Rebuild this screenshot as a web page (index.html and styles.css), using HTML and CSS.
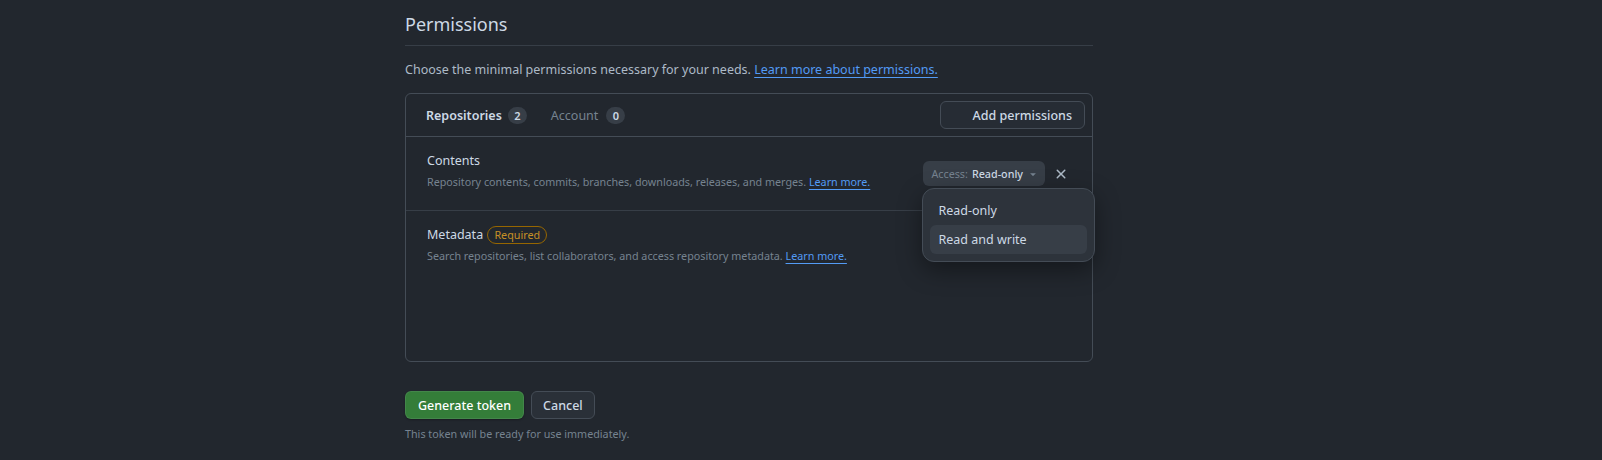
FILE: index.html
```html
<!DOCTYPE html>
<html lang="en">
<head>
<meta charset="utf-8">
<title>Permissions</title>
<link rel="stylesheet" href="styles.css">
</head>
<body>
<div class="page">
  <main class="main">
    <h2 class="subhead">Permissions</h2>
    <p class="intro">Choose the minimal permissions necessary for your needs. <a class="link" href="#">Learn more about permissions.</a></p>

    <section class="perm-box">
      <div class="perm-head">
        <nav class="tabs">
          <span class="tab tab-active">Repositories <span class="counter">2</span></span>
          <span class="tab">Account <span class="counter">0</span></span>
        </nav>
        <button class="btn btn-add" type="button"><span class="icon-slot"></span>Add permissions</button>
      </div>

      <ul class="perm-list">
        <li class="perm-row">
          <div class="perm-info">
            <div class="perm-name">Contents</div>
            <div class="perm-desc">Repository contents, commits, branches, downloads, releases, and merges. <a class="link" href="#">Learn more.</a></div>
          </div>
          <div class="perm-actions">
            <div class="access-wrap">
              <button class="access-btn" type="button"><span class="access-label">Access:</span><span class="access-value">Read-only</span><svg class="caret" width="12" height="12" viewBox="0 0 16 16" aria-hidden="true"><path fill="currentColor" d="m4.427 7.427 3.396 3.396a.25.25 0 0 0 .354 0l3.396-3.396A.25.25 0 0 0 11.396 7H4.604a.25.25 0 0 0-.177.427Z"/></svg></button>
              <div class="menu">
                <div class="menu-item">Read-only</div>
                <div class="menu-item menu-item-active">Read and write</div>
              </div>
            </div>
            <button class="remove-btn" type="button" aria-label="Remove">
              <svg width="16" height="16" viewBox="0 0 16 16" aria-hidden="true"><path fill="currentColor" d="M3.72 3.72a.75.75 0 0 1 1.06 0L8 6.94l3.22-3.22a.749.749 0 0 1 1.275.326.749.749 0 0 1-.215.734L9.06 8l3.22 3.22a.749.749 0 0 1-.326 1.275.749.749 0 0 1-.734-.215L8 9.06l-3.22 3.22a.751.751 0 0 1-1.042-.018.751.751 0 0 1-.018-1.042L6.94 8 3.72 4.78a.75.75 0 0 1 0-1.06Z"/></svg>
            </button>
          </div>
        </li>
        <li class="perm-row perm-row-last">
          <div class="perm-info">
            <div class="perm-name">Metadata <span class="badge">Required</span></div>
            <div class="perm-desc">Search repositories, list collaborators, and access repository metadata. <a class="link" href="#">Learn more.</a></div>
          </div>
        </li>
      </ul>
    </section>

    <div class="form-actions">
      <button class="btn btn-primary" type="button">Generate token</button>
      <button class="btn btn-cancel" type="button">Cancel</button>
    </div>
    <p class="note">This token will be ready for use immediately.</p>
  </main>
</div>
</body>
</html>
```

FILE: styles.css
```css
* { box-sizing: border-box; }

body {
  margin: 0;
  background: #22272e;
  color: #adbac7;
  font-family: "Noto Sans", "Open Sans", sans-serif;
  font-size: 12.5px;
  line-height: 21px;
}

.page {
  display: flex;
  padding-left: 405px;
}

.main {
  width: 688px;
}

.subhead {
  margin: 0;
  padding: 9px 0 6px;
  font-size: 18px;
  line-height: 30px;
  font-weight: 400;
  color: #cdd9e5;
  border-bottom: 1px solid #373e47;
}

.intro {
  margin: 13px 0 0;
}

.link {
  color: #539bf5;
  text-decoration: underline;
  text-underline-offset: 3px;
}

.perm-box {
  margin-top: 13px;
  border: 1px solid #444c56;
  border-radius: 6px;
}

.perm-head {
  display: flex;
  align-items: center;
  justify-content: space-between;
  height: 43px;
  padding: 0 7px 0 12px;
  border-bottom: 1px solid #444c56;
}

.tabs {
  display: flex;
  gap: 8px;
}

.tab {
  display: inline-flex;
  align-items: center;
  padding: 0 8px;
  color: #768390;
}

.tab-active {
  color: #cdd9e5;
  font-weight: 600;
}

.counter {
  display: inline-block;
  min-width: 19px;
  height: 17px;
  margin-left: 6px;
  padding: 0 5px;
  border-radius: 2em;
  background: #373e47;
  color: #cdd9e5;
  font-size: 11px;
  font-weight: 600;
  line-height: 17px;
  text-align: center;
}

.tab:not(.tab-active) .counter {
  margin-left: 8px;
}

.btn {
  display: inline-flex;
  align-items: center;
  height: 28px;
  padding: 0 12px;
  border: 1px solid #444c56;
  border-radius: 6px;
  background: #2a3038;
  color: #cdd9e5;
  font-family: inherit;
  font-size: 12.5px;
  font-weight: 500;
}

.btn-add {
  background: #262c34;
}

.btn-cancel {
  padding: 0 11px;
}

.icon-slot {
  display: inline-block;
  width: 20px;
}

.btn-primary {
  background: #347d39;
  border-color: rgba(205, 217, 229, 0.1);
  color: #ffffff;
  box-shadow: 0 1px 2px rgba(0, 0, 0, 0.3);
}

.perm-list {
  list-style: none;
  margin: 0;
  padding: 0;
  height: 224px;
}

.perm-row {
  display: flex;
  align-items: center;
  justify-content: space-between;
  padding: 13px 15px 19px 21px;
  border-bottom: 1px solid #373e47;
}

.perm-row-last {
  border-bottom: 0;
}

.perm-name {
  color: #cdd9e5;
}

.perm-desc {
  margin-top: 2px;
  font-size: 10.75px;
  line-height: 18px;
  color: #768390;
}

.badge {
  display: inline-block;
  height: 18px;
  padding: 0 6px;
  margin-left: 1px;
  border: 1px solid #966600;
  border-radius: 2em;
  color: #c69026;
  font-size: 10.75px;
  line-height: 16px;
}

.perm-actions {
  display: flex;
  align-items: center;
  margin-top: 6px;
}

.access-wrap {
  position: relative;
}

.access-btn {
  display: inline-flex;
  align-items: center;
  gap: 4px;
  height: 25px;
  padding: 0 6px 0 8px;
  border: 0;
  border-radius: 6px;
  background: #373e47;
  color: #cdd9e5;
  font-family: inherit;
  font-size: 10.75px;
  font-weight: 500;
}

.access-label {
  color: #768390;
  font-weight: 400;
}

.caret {
  color: #768390;
}

.remove-btn {
  display: inline-flex;
  align-items: center;
  justify-content: center;
  width: 32px;
  height: 28px;
  padding: 0;
  border: 0;
  background: transparent;
  color: #adbac7;
}

.menu {
  position: absolute;
  top: 27px;
  left: -1px;
  width: 173px;
  padding: 7px;
  background: #2d333b;
  border: 1px solid #444c56;
  border-radius: 12px;
  box-shadow: 0 8px 24px rgba(0, 0, 0, 0.4);
  z-index: 10;
}

.menu-item {
  padding: 4px 8px;
  border-radius: 6px;
  color: #cdd9e5;
}

.menu-item-active {
  background: #373e47;
}

.form-actions {
  display: flex;
  gap: 7px;
  margin-top: 29px;
}

.note {
  margin: 6px 0 0;
  font-size: 10.75px;
  line-height: 18px;
  color: #768390;
}
```
